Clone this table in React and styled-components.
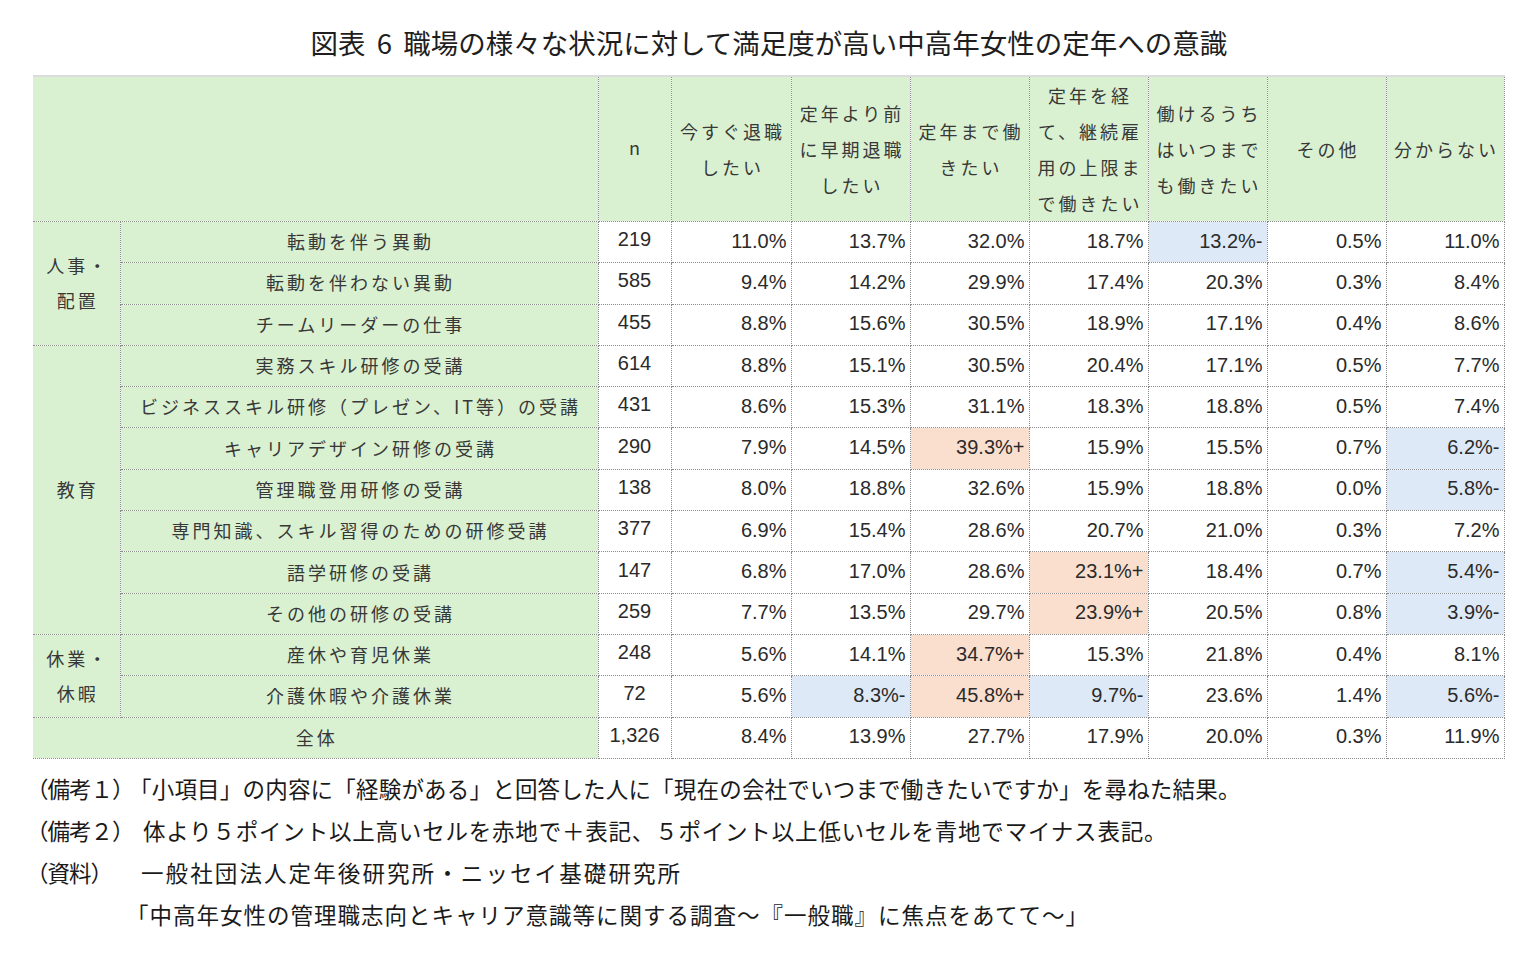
import React from 'react'
import styled, { createGlobalStyle } from 'styled-components'

const GlobalStyle = createGlobalStyle`
body {
  margin: 0;
  background: #fff;
  color: #222;
  font-family: "Noto Sans CJK JP", "Noto Sans", sans-serif;
}
`

const Page = styled.div`
width: 1538px;
height: 967px;
display: flex;
flex-direction: column;
`

const Title = styled.h1`
margin: 0;
padding-top: 26px;
height: 75px;
box-sizing: border-box;
text-align: center;
font-size: 27.5px;
font-weight: 400;
line-height: 32px;
word-spacing: 5px;
color: #1e1e1e;
white-space: nowrap;
`

const TableWrap = styled.div`
padding-left: 33px;
`

const Table = styled.table`
border-collapse: collapse;
table-layout: fixed;
width: 1471px;
border-top: 2px solid #dcdcdc;
font-size: 18px;
color: #383838;
`

const HeadRow = styled.tr`
height: 145px;
`

const Row = styled.tr`
height: 41.3px;
`

const Cell = styled.td`
padding: 0 3px 0 0;
border: 1px dotted #8a8a8a;
background: ${p => p.$bg || '#fff'};
white-space: nowrap;
overflow: hidden;
`

const HeadCell = styled(Cell).attrs({ as: 'th' })`
background: #daf1d1;
font-weight: 400;
text-align: center;
line-height: 36px;
letter-spacing: ${p => p.$plain ? '0' : '3px'};
padding: ${p => p.$plain ? '0 0 4px' : '0 0 0 3px'};
border-top: none;
`

const BlankHead = styled(HeadCell)`
border-left: none;
`

const GroupCell = styled(Cell)`
background: #daf1d1;
text-align: center;
line-height: 35px;
letter-spacing: 3px;
padding: 0 0 0 3px;
border-left: none;
`

const ItemCell = styled(Cell)`
background: #daf1d1;
text-align: center;
letter-spacing: 3px;
padding: 0 0 2px 3px;
`

const TotalLabel = styled(ItemCell)`
border-left: none;
`

const NumCell = styled(Cell)`
font-family: "Liberation Sans", Arial, sans-serif;
font-size: 20px;
text-align: ${p => p.$center ? 'center' : 'right'};
padding-right: ${p => p.$center ? '0' : '4px'};
padding-bottom: ${p => p.$center ? '5px' : '2px'};
color: #2a2a2a;
`

const Notes = styled.div`
display: grid;
grid-template-columns: 115px auto;
padding: 8px 0 0 26px;
font-size: 22.5px;
line-height: 42px;
color: #1a1a1a;
white-space: nowrap;
`

const NoteLabel = styled.div`
letter-spacing: -1px;
`

const NoteText = styled.div`
letter-spacing: ${p => p.$ls}px;
margin-left: ${p => p.$shift}px;
`

const heads = [
  ['今すぐ退職', 'したい'],
  ['定年より前', 'に早期退職', 'したい'],
  ['定年まで働', 'きたい'],
  ['定年を経', 'て、継続雇', '用の上限ま', 'で働きたい'],
  ['働けるうち', 'はいつまで', 'も働きたい'],
  ['その他'],
  ['分からない'],
]

const groups = [
  {
    label: ['人事・', '配置'],
    rows: [
      ['転動を伴う異動', '219', '11.0%', '13.7%', '32.0%', '18.7%', '13.2%-', '0.5%', '11.0%'],
      ['転動を伴わない異動', '585', '9.4%', '14.2%', '29.9%', '17.4%', '20.3%', '0.3%', '8.4%'],
      ['チームリーダーの仕事', '455', '8.8%', '15.6%', '30.5%', '18.9%', '17.1%', '0.4%', '8.6%'],
    ],
  },
  {
    label: ['教育'],
    rows: [
      ['実務スキル研修の受講', '614', '8.8%', '15.1%', '30.5%', '20.4%', '17.1%', '0.5%', '7.7%'],
      ['ビジネススキル研修（プレゼン、IT等）の受講', '431', '8.6%', '15.3%', '31.1%', '18.3%', '18.8%', '0.5%', '7.4%'],
      ['キャリアデザイン研修の受講', '290', '7.9%', '14.5%', '39.3%+', '15.9%', '15.5%', '0.7%', '6.2%-'],
      ['管理職登用研修の受講', '138', '8.0%', '18.8%', '32.6%', '15.9%', '18.8%', '0.0%', '5.8%-'],
      ['専門知識、スキル習得のための研修受講', '377', '6.9%', '15.4%', '28.6%', '20.7%', '21.0%', '0.3%', '7.2%'],
      ['語学研修の受講', '147', '6.8%', '17.0%', '28.6%', '23.1%+', '18.4%', '0.7%', '5.4%-'],
      ['その他の研修の受講', '259', '7.7%', '13.5%', '29.7%', '23.9%+', '20.5%', '0.8%', '3.9%-'],
    ],
  },
  {
    label: ['休業・', '休暇'],
    rows: [
      ['産休や育児休業', '248', '5.6%', '14.1%', '34.7%+', '15.3%', '21.8%', '0.4%', '8.1%'],
      ['介護休暇や介護休業', '72', '5.6%', '8.3%-', '45.8%+', '9.7%-', '23.6%', '1.4%', '5.6%-'],
    ],
  },
]

const total = ['1,326', '8.4%', '13.9%', '27.7%', '17.9%', '20.0%', '0.3%', '11.9%']

const notes = [
  ['（備考１）', '「小項目」の内容に「経験がある」と回答した人に「現在の会社でいつまで働きたいですか」を尋ねた結果。', -12, 0.2],
  ['（備考２）', '体より５ポイント以上高いセルを赤地で＋表記、５ポイント以上低いセルを青地でマイナス表記。', 2, 0.8],
  ['（資料）', '一般社団法人定年後研究所・ニッセイ基礎研究所', 0, 2.1],
  ['', '「中高年女性の管理職志向とキャリア意識等に関する調査～『一般職』に焦点をあてて～」', -15, 1],
]

const colWidths = [87, 478, 73, 120, 119, 119, 119, 119, 119, 118]

const bgFor = v => (v.endsWith('+') ? '#fadfce' : v.endsWith('-') ? '#dde9f6' : undefined)

const Lines = ({ lines }) => lines.map((l, i) => (
  <React.Fragment key={i}>
    {i > 0 && <br />}
    {l}
  </React.Fragment>
))

const Values = ({ values }) => values.map((v, i) => (
  <NumCell key={i} $bg={bgFor(v)}>{v}</NumCell>
))

export default function App() {
  return (
    <Page>
      <GlobalStyle />
      <Title>図表 6 職場の様々な状況に対して満足度が高い中高年女性の定年への意識</Title>
      <TableWrap>
        <Table>
          <colgroup>
            {colWidths.map((w, i) => <col key={i} style={{ width: w }} />)}
          </colgroup>
          <thead>
            <HeadRow>
              <BlankHead colSpan={2} />
              <HeadCell $plain>n</HeadCell>
              {heads.map((h, i) => (
                <HeadCell key={i}><Lines lines={h} /></HeadCell>
              ))}
            </HeadRow>
          </thead>
          <tbody>
            {groups.map(g => g.rows.map((r, ri) => (
              <Row key={r[0]}>
                {ri === 0 && (
                  <GroupCell rowSpan={g.rows.length}><Lines lines={g.label} /></GroupCell>
                )}
                <ItemCell>{r[0]}</ItemCell>
                <NumCell $center>{r[1]}</NumCell>
                <Values values={r.slice(2)} />
              </Row>
            )))}
            <Row>
              <TotalLabel colSpan={2}>全体</TotalLabel>
              <NumCell $center>{total[0]}</NumCell>
              <Values values={total.slice(1)} />
            </Row>
          </tbody>
        </Table>
      </TableWrap>
      <Notes>
        {notes.map(([label, text, shift, ls], i) => (
          <React.Fragment key={i}>
            <NoteLabel>{label}</NoteLabel>
            <NoteText $shift={shift} $ls={ls}>{text}</NoteText>
          </React.Fragment>
        ))}
      </Notes>
    </Page>
  )
}
